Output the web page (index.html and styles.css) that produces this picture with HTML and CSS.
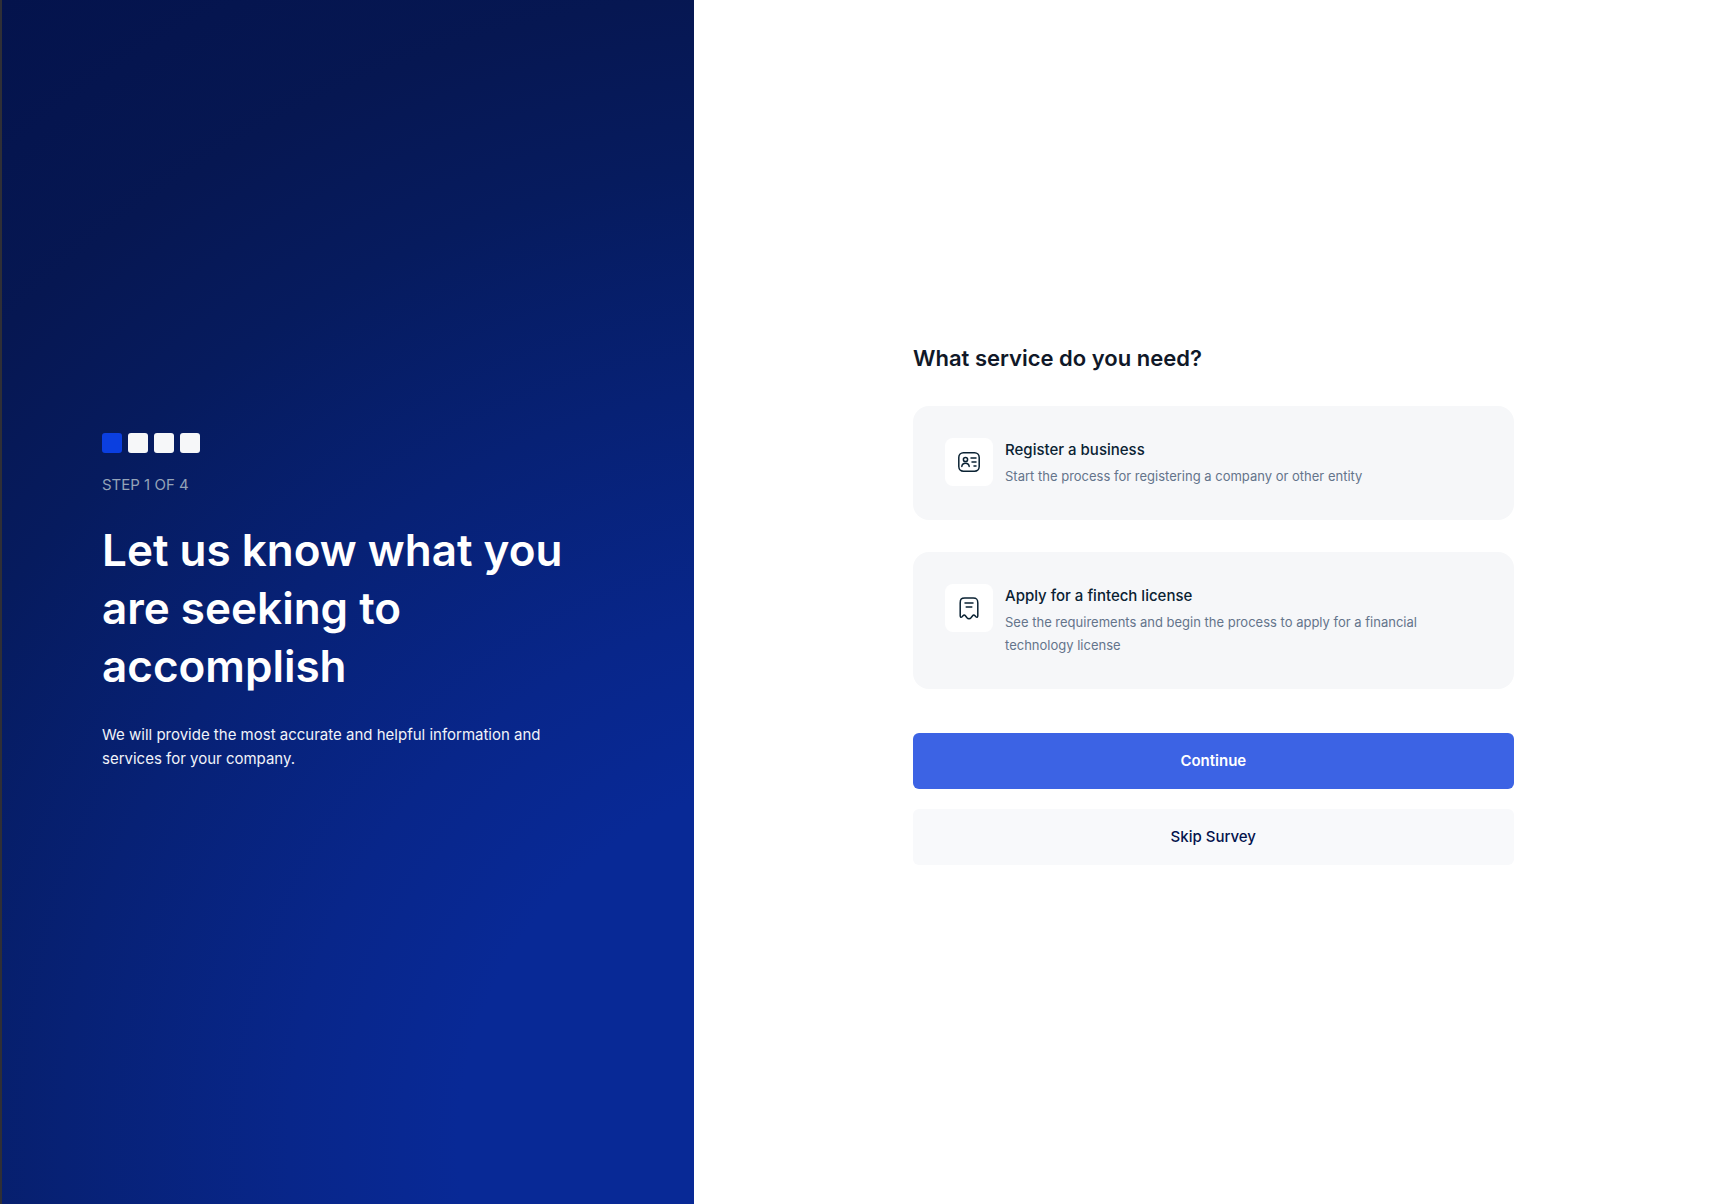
FILE: index.html
```html
<!DOCTYPE html>
<html lang="en">
<head>
<meta charset="utf-8">
<meta name="viewport" content="width=device-width, initial-scale=1">
<title>What service do you need?</title>
<link rel="stylesheet" href="styles.css">
</head>
<body>
<div class="page">
  <aside class="intro">
    <div class="intro-content">
      <div class="steps" aria-hidden="true">
        <span class="step step-active"></span>
        <span class="step"></span>
        <span class="step"></span>
        <span class="step"></span>
      </div>
      <p class="step-label">STEP 1 OF 4</p>
      <h1 class="intro-title">Let us know what you are seeking to accomplish</h1>
      <p class="intro-text">We will provide the most accurate and helpful information and services for your company.</p>
    </div>
  </aside>
  <main class="survey">
    <form class="survey-form">
      <h2 class="question">What service do you need?</h2>
      <div class="options">
        <label class="option">
          <input class="option-input" type="radio" name="service" value="register">
          <span class="option-icon">
            <svg width="24" height="24" viewBox="0 0 24 24" fill="none" stroke="currentColor" stroke-width="1.5" stroke-linecap="round" stroke-linejoin="round" aria-hidden="true">
              <rect x="1.8" y="2.8" width="20.4" height="18.4" rx="4.6"/>
              <circle cx="8.5" cy="9.5" r="2.1"/>
              <path d="M4.800 16.400c.2-2 1.800-3.200 3.700-3.200s3.500 1.200 3.700 3.200M14 8h5M15 12h4M17 16h2"/>
            </svg>
          </span>
          <span class="option-body">
            <span class="option-title">Register a business</span>
            <span class="option-text">Start the process for registering a company or other entity</span>
          </span>
        </label>
        <label class="option">
          <input class="option-input" type="radio" name="service" value="license">
          <span class="option-icon">
            <svg width="24" height="24" viewBox="0 0 24 24" fill="none" stroke="currentColor" stroke-width="1.5" stroke-linecap="round" stroke-linejoin="round" aria-hidden="true">
              <path d="M3.200 7c0-3.800 1.100-5 4.600-5h8.400c3.500 0 4.600 1.200 4.600 5v12.800c0 1.600-.9 1.900-1.900.9l-.9-1c-.8-.9-1.700-.9-2.400 0l-1.600 2.100c-1 1.200-3 1.200-4 0l-1.600-2.100c-.7-.9-1.600-.9-2.400 0l-.9 1c-1 1-1.900.7-1.900-.9z"/>
              <path d="M8 7h8M9.200 11h5.600"/>
            </svg>
          </span>
          <span class="option-body">
            <span class="option-title">Apply for a fintech license</span>
            <span class="option-text">See the requirements and begin the process to apply for a financial technology license</span>
          </span>
        </label>
      </div>
      <div class="actions">
        <button class="button button-primary" type="submit">Continue</button>
        <button class="button button-secondary" type="button">Skip Survey</button>
      </div>
    </form>
  </main>
</div>
</body>
</html>
```
FILE: styles.css
```css
* {
  box-sizing: border-box;
}

body {
  margin: 0;
  font-family: Inter, "Liberation Sans", sans-serif;
  font-size: 15px;
  line-height: 24px;
  color: #101828;
  background: #fff;
}

h1, h2, p {
  margin: 0;
}

.page {
  display: grid;
  grid-template-columns: 2fr 3fr;
  min-height: 100vh;
  border-left: 2px solid #2f2f36;
}

.intro {
  display: flex;
  align-items: center;
  padding: 40px 100px;
  background: radial-gradient(circle farthest-corner at 119% 95%, #082996 0%, #082996 26%, #08268a 38%, #072175 54%, #061b5e 70%, #061752 82%, #04134c 100%);
}

.intro-content {
  max-width: 464px;
}

.steps {
  display: flex;
  gap: 6px;
  margin-bottom: 20px;
}

.step {
  width: 20px;
  height: 20px;
  border-radius: 3px;
  background: #f6f7f9;
}

.step-active {
  background: #0b3fe0;
}

.step-label {
  margin-bottom: 24px;
  color: #94a3b8;
}

.intro-title {
  margin-bottom: 28px;
  font-size: 44px;
  font-weight: 600;
  line-height: 58px;
  color: #fff;
}

.intro-text {
  color: #f1f3f9;
}

.survey {
  display: flex;
  align-items: center;
  justify-content: center;
  padding-left: 2px;
}

.survey-form {
  width: 58%;
}

.question {
  margin-bottom: 30px;
  font-size: 22px;
  font-weight: 600;
  line-height: 36px;
}

.options {
  display: grid;
  gap: 32px;
  margin-bottom: 44px;
}

.option {
  position: relative;
  display: flex;
  align-items: flex-start;
  gap: 12px;
  padding: 32px;
  border-radius: 16px;
  background: #f6f7f9;
  cursor: pointer;
}

.option-input {
  position: absolute;
  width: 1px;
  height: 1px;
  margin: 0;
  opacity: 0;
}

.option-icon {
  display: flex;
  flex: none;
  align-items: center;
  justify-content: center;
  width: 48px;
  height: 48px;
  border-radius: 8px;
  background: #fff;
  color: #0a2233;
}

.option-body {
  display: grid;
  gap: 4px;
}

.option-title {
  font-weight: 500;
  line-height: 23px;
  color: #0a2233;
}

.option-text {
  font-size: 13px;
  line-height: 23px;
  color: #64748b;
}

.actions {
  display: grid;
  gap: 20px;
}

.button {
  padding: 16px;
  border: 0;
  border-radius: 6px;
  font: 500 15px/24px Inter, "Liberation Sans", sans-serif;
  cursor: pointer;
}

.button-primary {
  font-weight: 600;
  color: #fff;
  background: #3c63e4;
}

.button-secondary {
  color: #04134c;
  background: #f8f9fb;
}
```
